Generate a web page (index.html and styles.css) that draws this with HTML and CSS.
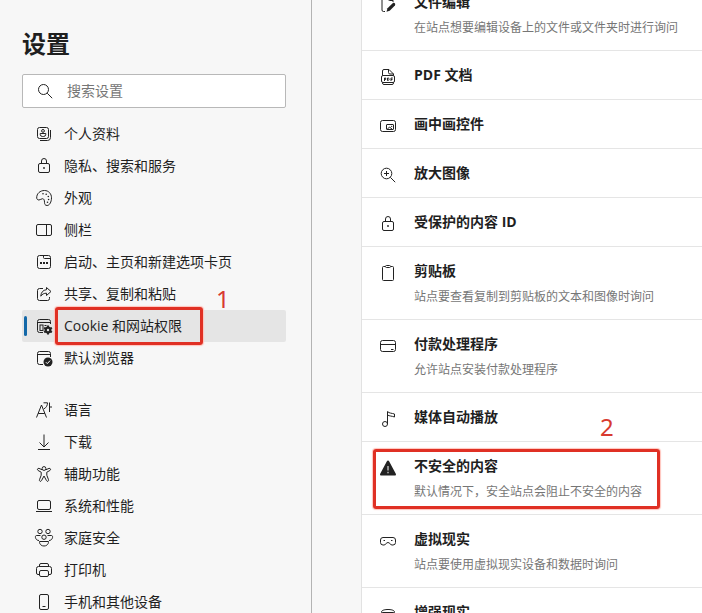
FILE: index.html
```html
<!DOCTYPE html>
<html lang="zh-CN">
<head>
  <meta charset="UTF-8">
  <meta name="viewport" content="width=device-width, initial-scale=1.0">
  <title>设置</title>
  <link rel="stylesheet" href="styles.css">
</head>
<body>

  <aside class="sidebar">
    <h1>设置</h1>

    <div class="search">
      <svg class="icon" viewBox="0 0 16 16"><circle cx="6.500" cy="6.500" r="5"/><path d="M10.200 10.200l5 5"/></svg>
      <input type="search" placeholder="搜索设置" aria-label="搜索设置">
    </div>

    <nav class="menu">
      <a href="#profiles">
        <svg class="icon" viewBox="0 0 16 16"><rect x="1.500" y="1.500" width="11" height="11" rx="2"/><circle cx="7" cy="4.900" r="1.400"/><path d="M4.200 7.500h5.600v.8a2.300 2.300 0 0 1-2.300 2.200h-1a2.300 2.300 0 0 1-2.300-2.200z"/><path d="M14.500 4v7.500a3 3 0 0 1-3 3H4"/></svg>
        个人资料
      </a>
      <a href="#privacy">
        <svg class="icon" viewBox="0 0 16 16"><rect x="2.500" y="5.500" width="11" height="9" rx="1.500"/><path d="M5.500 5.500V3a2.500 2.500 0 0 1 5 0v2.500"/><circle class="fill" cx="8" cy="10" r=".9"/></svg>
        隐私、搜索和服务
      </a>
      <a href="#appearance">
        <svg class="icon" viewBox="0 0 16 16"><path d="M.7 8C.5 3.500 4.200.500 8.500.500c4 0 7 3.200 7 7.300 0 4.200-2 7.700-4.400 7.700-2.200 0-2.600-1.600-2.600-3.200 0-2-.5-3.600-2-3.600-1.400 0-2 1.300-3.600 1.300C1.500 10 .8 9 .7 8z"/><g class="fill"><circle cx="7" cy="3.800" r=".8"/><circle cx="10.200" cy="4.200" r=".8"/><circle cx="12.300" cy="6.500" r=".8"/><circle cx="12.600" cy="9.500" r=".8"/><circle cx="11.500" cy="12.300" r=".8"/></g></svg>
        外观
      </a>
      <a href="#sidebar">
        <svg class="icon" viewBox="0 0 16 16"><rect x=".5" y="2.500" width="15" height="11" rx="1.500"/><path d="M10.500 2.500v11"/></svg>
        侧栏
      </a>
      <a href="#start">
        <svg class="icon" viewBox="0 0 16 16"><rect x="1.500" y="1.500" width="13" height="13" rx="2"/><path d="M7.500 1.500v2a1 1 0 0 0 1 1h6"/><path class="fill" d="M4 8h2v2H4zM7 8h2v2H7zM10 8h2v2h-2z"/></svg>
        启动、主页和新建选项卡页
      </a>
      <a href="#share">
        <svg class="icon" viewBox="0 0 16 16"><path d="M7 2.500H3.500a2 2 0 0 0-2 2v8a2 2 0 0 0 2 2h8a2 2 0 0 0 2-2V11"/><path d="M10.500 1.500l4.500 4-4.500 4V7.200C8 7.200 6.200 8 4.800 10.200c.2-3.800 2.200-6.200 5.700-6.500z"/></svg>
        共享、复制和粘贴
      </a>
      <a href="#permissions" class="active" aria-current="page">
        <svg class="icon" viewBox="0 0 16 16"><path d="M7 14.500H3.500a2 2 0 0 1-2-2v-9a2 2 0 0 1 2-2h9a2 2 0 0 1 2 2V6M1.500 4.500h13"/><rect x="4" y="7" width="3" height="5.500"/><path d="M8.500 7.500h2"/><circle class="gear" cx="12" cy="12" r="2.500"/><path class="teeth" d="M12 7.500v9M8.100 9.750l7.800 4.500M8.100 14.250l7.800-4.500"/><circle class="hole" cx="12" cy="12" r="1.200"/></svg>
        Cookie 和网站权限
        <span class="mark mark-menu"></span>
        <span class="step step-menu">1</span>
      </a>
      <a href="#default">
        <svg class="icon" viewBox="0 0 16 16"><path d="M7 14.500H3.500a2 2 0 0 1-2-2v-9a2 2 0 0 1 2-2h9a2 2 0 0 1 2 2V7M1.500 4.500h13"/><circle class="fill" cx="12" cy="12" r="4.500"/><path class="check" d="M9.900 12.200l1.400 1.400 2.800-3"/></svg>
        默认浏览器
      </a>

      <a href="#languages" class="group">
        <svg class="icon" viewBox="0 0 16 16"><path d="M.5 15.500L5.500 3l5 12.500M2.200 11.500h6.600M7.500.800h4c0 2.700-1.200 4.800-3.500 6M13.500.500v9.500M13.500 5H16"/></svg>
        语言
      </a>
      <a href="#downloads">
        <svg class="icon" viewBox="0 0 16 16"><path d="M8 .5v12M3.500 8.500L8 13l4.500-4.500M2 15.500h12"/></svg>
        下载
      </a>
      <a href="#accessibility">
        <svg class="icon" viewBox="0 0 16 16"><circle cx="8" cy="2.500" r="1.900"/><path d="M6.200 3.800L3 2.400c-1.500-.5-2.200 1.400-.9 2.100L5.200 6.200v3l-1.700 4.500c-.5 1.600 1.400 2.300 2 .9L8 10l2.500 4.600c.6 1.400 2.500.7 2-.9l-1.700-4.500v-3l3.100-1.700c1.300-.7.6-2.600-.9-2.100L9.800 3.800"/></svg>
        辅助功能
      </a>
      <a href="#system">
        <svg class="icon" viewBox="0 0 16 16"><rect x="1.500" y="2.500" width="13" height="9" rx="1.500"/><path d="M0 13.500h16"/></svg>
        系统和性能
      </a>
      <a href="#family">
        <svg class="icon" viewBox="0 0 16 16"><circle cx="4" cy="1.500" r="2.200"/><circle cx="12" cy="1.500" r="2.200"/><circle cx="8" cy="7.200" r="2.200"/><path d="M4.500 5.500H.5C-1.500 5.500-.8 10.500 3 10.500M11.500 5.500h4c2 0 1.300 5-2.500 5M3.500 11.500h9c.3 6-9.300 6-9 0z"/></svg>
        家庭安全
      </a>
      <a href="#printers">
        <svg class="icon" viewBox="0 0 16 16"><path d="M3.500 12.500H2a1.500 1.500 0 0 1-1.500-1.500V6.500a2 2 0 0 1 2-2h11a2 2 0 0 1 2 2V11a1.500 1.500 0 0 1-1.500 1.500h-1.500M3.500 4.500V3A1.500 1.500 0 0 1 5 1.500h6A1.500 1.500 0 0 1 12.500 3v1.500"/><rect x="3.500" y="8.500" width="9" height="6" rx="1.500"/></svg>
        打印机
      </a>
      <a href="#phone">
        <svg class="icon" viewBox="0 0 16 16"><rect x="3.500" y=".5" width="9" height="15" rx="1.500"/><path d="M6.500 12.500h3"/></svg>
        手机和其他设备
      </a>
    </nav>
  </aside>

  <main class="content">
    <div class="list">
      <a class="row" href="#file-editing">
        <svg class="icon" viewBox="0 0 16 16"><path d="M5 15.500H3.500a1.500 1.500 0 0 1-1.500-1.500V2A1.500 1.500 0 0 1 3.500.500H9L13 4.500V6M8.500.500v3a1 1 0 0 0 1 1H13"/><path class="fill" d="M6.500 15.800l1-3.600 5.200-5c1.400-1.100 3.300.8 2.200 2.200l-5.200 5.300z"/></svg>
        <div class="text">
          <h2>文件编辑</h2>
          <p>在站点想要编辑设备上的文件或文件夹时进行询问</p>
        </div>
      </a>
      <a class="row" href="#pdf">
        <svg class="icon" viewBox="0 0 16 16"><path d="M2.500 6.500V2A1.500 1.500 0 0 1 4 .500h5L13.500 5v1.500M8.500.500v3a1.500 1.500 0 0 0 1.500 1.500h3.500M2.500 13.500v.5A1.500 1.500 0 0 0 4 15.500h8a1.500 1.500 0 0 0 1.500-1.500v-.5"/><rect x="1.500" y="6.500" width="13" height="7" rx="1.500"/><path d="M4.500 12V9h1.200v1.500H4.500M7.500 9v2.500h.8L9 10.800V9.500L8.300 9zM11 12V9h1.800M11 10.500h1.500"/></svg>
        <div class="text">
          <h2>PDF 文档</h2>
        </div>
      </a>
      <a class="row" href="#pip">
        <svg class="icon" viewBox="0 0 16 16"><rect x=".5" y="2.500" width="15" height="11" rx="2"/><rect x="6.500" y="6.500" width="7" height="5" rx=".5"/><path d="M7.500 11l2-2 2.500 2"/><circle class="fill" cx="11.700" cy="8.400" r=".6"/></svg>
        <div class="text">
          <h2>画中画控件</h2>
        </div>
      </a>
      <a class="row" href="#magnify">
        <svg class="icon" viewBox="0 0 16 16"><circle cx="6.500" cy="6.500" r="5.300"/><path d="M10.300 10.300l4.900 4.900M6.500 4v5M4 6.500h5"/></svg>
        <div class="text">
          <h2>放大图像</h2>
        </div>
      </a>
      <a class="row" href="#protected">
        <svg class="icon" viewBox="0 0 16 16"><rect x="2.500" y="5.500" width="11" height="9" rx="1.500"/><path d="M5.500 5.500V3a2.500 2.500 0 0 1 5 0v2.500"/><circle class="fill" cx="8" cy="10" r=".9"/></svg>
        <div class="text">
          <h2>受保护的内容 ID</h2>
        </div>
      </a>
      <a class="row" href="#clipboard">
        <svg class="icon" viewBox="0 0 16 16"><path d="M5 1.500H3.500a1 1 0 0 0-1 1v12a1 1 0 0 0 1 1h9a1 1 0 0 0 1-1v-12a1 1 0 0 0-1-1H11"/><rect x="5.500" y=".5" width="5" height="2" rx="1"/></svg>
        <div class="text">
          <h2>剪贴板</h2>
          <p>站点要查看复制到剪贴板的文本和图像时询问</p>
        </div>
      </a>
      <a class="row" href="#payment">
        <svg class="icon" viewBox="0 0 16 16"><rect x=".5" y="2.500" width="15" height="11" rx="2"/><path d="M.5 6.500h15M11 11.500h2.500"/></svg>
        <div class="text">
          <h2>付款处理程序</h2>
          <p>允许站点安装付款处理程序</p>
        </div>
      </a>
      <a class="row" href="#autoplay">
        <svg class="icon" viewBox="0 0 16 16"><circle cx="5" cy="13" r="2.500"/><path d="M7.500 13V.500c2 2 4 1.500 7 2.500v3c-2.500-1-5-.8-7-2"/></svg>
        <div class="text">
          <h2>媒体自动播放</h2>
        </div>
      </a>
      <a class="row" href="#insecure">
        <svg class="icon" viewBox="0 0 16 16"><path class="fill" d="M6.900 1.200a1.200 1.200 0 0 1 2.200 0l6.700 12.600a1.100 1.100 0 0 1-1 1.700H1.200a1.100 1.100 0 0 1-1-1.700z"/><path class="bang" d="M8 6v4.500M8 11.800v1.500"/></svg>
        <div class="text">
          <h2>不安全的内容</h2>
          <p>默认情况下，安全站点会阻止不安全的内容</p>
        </div>
        <span class="mark mark-row"></span>
        <span class="step step-row">2</span>
      </a>
      <a class="row" href="#vr">
        <svg class="icon" viewBox="0 0 16 16"><path d="M3 4.500h10a2.500 2.500 0 0 1 2.500 2.500v2.500a2.500 2.500 0 0 1-2.500 2.500h-1c-1.600 0-2.300-2.500-4-2.500S5.600 12 4 12H3A2.500 2.500 0 0 1 .5 9.500V7A2.500 2.500 0 0 1 3 4.500z"/><path d="M3.500 7.500H5M11 7.500h1.500"/></svg>
        <div class="text">
          <h2>虚拟现实</h2>
          <p>站点要使用虚拟现实设备和数据时询问</p>
        </div>
      </a>
      <a class="row" href="#ar">
        <svg class="icon" viewBox="0 0 16 16"><path d="M1.500 6.500V6c0-2 4-2.500 6.500-2.500s6.500.5 6.500 2.500v.5M3 6.500h10a2.500 2.500 0 0 1 2.500 2.500v1a2.500 2.500 0 0 1-2.500 2.500h-1c-1.600 0-2.300-2-4-2s-2.400 2-4 2H3A2.500 2.500 0 0 1 .5 10V9A2.500 2.500 0 0 1 3 6.500z"/></svg>
        <div class="text">
          <h2>增强现实</h2>
        </div>
      </a>
    </div>
  </main>

</body>
</html>
```
FILE: styles.css
```css
* {
  box-sizing: border-box;
}
body {
  display: flex;
  height: 100vh;
  margin: 0;
  overflow: hidden;
  background-color: #f7f7f7;
  color: #1f1f1f;
  font-family: "Open Sans", "Noto Sans CJK SC", sans-serif;
  font-size: 14px;
  line-height: 20px;
}
h1, h2, p {
  margin: 0;
}
a {
  color: inherit;
  text-decoration: none;
}

/* icons */
.icon {
  flex: none;
  width: 16px;
  height: 16px;
  overflow: visible;
  fill: none;
  stroke: #222;
  stroke-width: 1;
}
.icon .fill {
  fill: #222;
  stroke: none;
}
.icon .gear {
  fill: #222;
  stroke-width: 2;
}
.icon .teeth {
  stroke-width: 2;
}
.icon .hole {
  fill: #e5e5e5;
  stroke: none;
}
.icon .check {
  stroke: #fff;
}
.icon .bang {
  stroke: #fff;
  stroke-width: 1;
}

/* sidebar */
.sidebar {
  flex: none;
  width: 312px;
  padding: 28px 25px 0 22px;
  border-right: 1px solid #b3b3b3;
}
h1 {
  margin-bottom: 14px;
  font-size: 24px;
  line-height: 32px;
}
.search {
  display: flex;
  align-items: center;
  gap: 14px;
  height: 34px;
  margin-bottom: 10px;
  padding: 0 14px;
  background-color: #fff;
  border: 1px solid #b8b8b8;
  border-radius: 2px;
}
.search input {
  flex: 1;
  min-width: 0;
  padding: 0;
  border: none;
  outline: none;
  background: none;
  font: inherit;
}
.search input::placeholder {
  color: #767676;
}
.menu a {
  position: relative;
  display: flex;
  align-items: center;
  gap: 12px;
  height: 32px;
  padding-left: 14px;
  border-radius: 2px;
}
.menu a.group {
  margin-top: 20px;
}
.menu a:hover {
  background-color: #eee;
}
.menu a.active {
  background-color: #e5e5e5;
}
.menu a.active::before {
  content: "";
  position: absolute;
  left: 2px;
  top: 6px;
  width: 3px;
  height: 20px;
  border-radius: 2px;
  background-color: #1368a8;
}

/* permission list */
.content {
  flex: 1;
  min-width: 0;
  padding-left: 49px;
}
.list {
  margin-top: -22px;
  background-color: #fff;
  border-left: 1px solid #e2e2e2;
}
.row {
  position: relative;
  display: flex;
  align-items: flex-start;
  gap: 18px;
  padding: 14px 18px;
  border-bottom: 1px solid #e5e5e5;
}
.row .icon {
  margin-top: 4px;
}
.text {
  display: flex;
  flex-direction: column;
  gap: 8px;
}
h2 {
  font-size: 14px;
  line-height: 20px;
}
p {
  color: #767676;
  font-size: 12px;
  line-height: 16px;
}

/* numbered callouts */
.mark {
  position: absolute;
  border: 3px solid #e03024;
  border-radius: 3px;
  box-shadow: 0 0 1px 1px #ffc4bc;
}
.mark-menu {
  left: 33px;
  top: -3px;
  width: 148px;
  height: 38px;
}
.mark-row {
  left: 11px;
  top: 7px;
  width: 287px;
  height: 60px;
}
.step {
  position: absolute;
  color: #d83a30;
  font-family: "Noto Sans", sans-serif;
  font-size: 24px;
  line-height: 24px;
}
.step-menu {
  left: 194px;
  top: -23px;
}
.step-row {
  left: 238px;
  top: -27px;
}
```
